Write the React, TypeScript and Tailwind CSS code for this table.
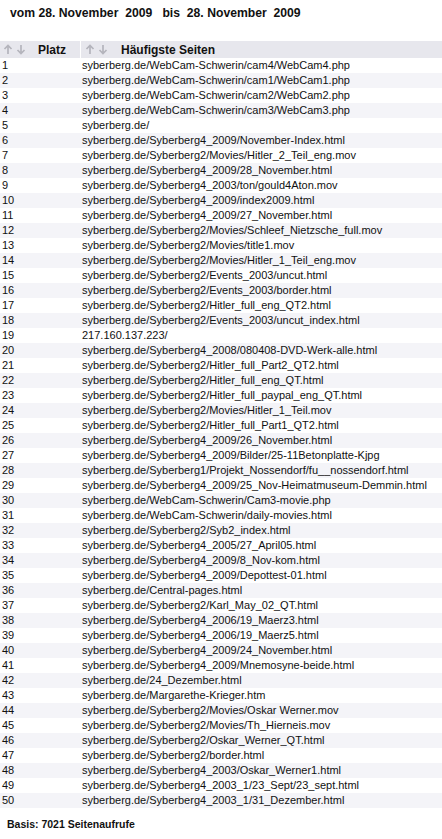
import React from "react";

const rows = [
  "syberberg.de/WebCam-Schwerin/cam4/WebCam4.php",
  "syberberg.de/WebCam-Schwerin/cam1/WebCam1.php",
  "syberberg.de/WebCam-Schwerin/cam2/WebCam2.php",
  "syberberg.de/WebCam-Schwerin/cam3/WebCam3.php",
  "syberberg.de/",
  "syberberg.de/Syberberg4_2009/November-Index.html",
  "syberberg.de/Syberberg2/Movies/Hitler_2_Teil_eng.mov",
  "syberberg.de/Syberberg4_2009/28_November.html",
  "syberberg.de/Syberberg4_2003/ton/gould4Aton.mov",
  "syberberg.de/Syberberg4_2009/index2009.html",
  "syberberg.de/Syberberg4_2009/27_November.html",
  "syberberg.de/Syberberg2/Movies/Schleef_Nietzsche_full.mov",
  "syberberg.de/Syberberg2/Movies/title1.mov",
  "syberberg.de/Syberberg2/Movies/Hitler_1_Teil_eng.mov",
  "syberberg.de/Syberberg2/Events_2003/uncut.html",
  "syberberg.de/Syberberg2/Events_2003/border.html",
  "syberberg.de/Syberberg2/Hitler_full_eng_QT2.html",
  "syberberg.de/Syberberg2/Events_2003/uncut_index.html",
  "217.160.137.223/",
  "syberberg.de/Syberberg4_2008/080408-DVD-Werk-alle.html",
  "syberberg.de/Syberberg2/Hitler_full_Part2_QT2.html",
  "syberberg.de/Syberberg2/Hitler_full_eng_QT.html",
  "syberberg.de/Syberberg2/Hitler_full_paypal_eng_QT.html",
  "syberberg.de/Syberberg2/Movies/Hitler_1_Teil.mov",
  "syberberg.de/Syberberg2/Hitler_full_Part1_QT2.html",
  "syberberg.de/Syberberg4_2009/26_November.html",
  "syberberg.de/Syberberg4_2009/Bilder/25-11Betonplatte-Kjpg",
  "syberberg.de/Syberberg1/Projekt_Nossendorf/fu__nossendorf.html",
  "syberberg.de/Syberberg4_2009/25_Nov-Heimatmuseum-Demmin.html",
  "syberberg.de/WebCam-Schwerin/Cam3-movie.php",
  "syberberg.de/WebCam-Schwerin/daily-movies.html",
  "syberberg.de/Syberberg2/Syb2_index.html",
  "syberberg.de/Syberberg4_2005/27_April05.html",
  "syberberg.de/Syberberg4_2009/8_Nov-kom.html",
  "syberberg.de/Syberberg4_2009/Depottest-01.html",
  "syberberg.de/Central-pages.html",
  "syberberg.de/Syberberg2/Karl_May_02_QT.html",
  "syberberg.de/Syberberg4_2006/19_Maerz3.html",
  "syberberg.de/Syberberg4_2006/19_Maerz5.html",
  "syberberg.de/Syberberg4_2009/24_November.html",
  "syberberg.de/Syberberg4_2009/Mnemosyne-beide.html",
  "syberberg.de/24_Dezember.html",
  "syberberg.de/Margarethe-Krieger.htm",
  "syberberg.de/Syberberg2/Movies/Oskar Werner.mov",
  "syberberg.de/Syberberg2/Movies/Th_Hierneis.mov",
  "syberberg.de/Syberberg2/Oskar_Werner_QT.html",
  "syberberg.de/Syberberg2/border.html",
  "syberberg.de/Syberberg4_2003/Oskar_Werner1.html",
  "syberberg.de/Syberberg4_2003_1/23_Sept/23_sept.html",
  "syberberg.de/Syberberg4_2003_1/31_Dezember.html",
];

function Arrows() {
  return (
    <span className="flex items-center gap-[3px]">
      <svg width="10" height="11" viewBox="0 0 10 11">
        <path d="M5 1.5 L5 10 M1.5 5 L5 1.5 L8.5 5" stroke="#b4b4bc" strokeWidth="1.7" fill="none" />
      </svg>
      <svg width="10" height="11" viewBox="0 0 10 11">
        <path d="M5 1 L5 9.5 M1.5 6 L5 9.5 L8.5 6" stroke="#b4b4bc" strokeWidth="1.7" fill="none" />
      </svg>
    </span>
  );
}

export default function App() {
  return (
    <div
      className="w-[442px] h-[839px] bg-white text-[#111] overflow-hidden"
      style={{ fontFamily: '"Liberation Sans", Arial, sans-serif' }}
    >
      <div className="pt-[4px] pl-[10px] h-[41px] text-[12.2px] font-bold whitespace-pre">
        {"vom 28. November  2009   bis  28. November  2009"}
      </div>
      <div className="flex h-[17px] items-stretch">
        <div className="w-[80px] bg-[#e7e7ed] flex items-center pl-[3px] gap-[12px]">
          <Arrows />
          <span className="text-[12px] font-bold">Platz</span>
        </div>
        <div className="w-[1px] bg-white" />
        <div className="flex-1 bg-[#e7e7ed] flex items-center pl-[4px] gap-[13px]">
          <Arrows />
          <span className="text-[12px] font-bold">Häufigste Seiten</span>
        </div>
      </div>
      <div className="flex flex-col">
        {rows.map((r, i) => (
          <div
            key={i}
            className={`flex h-[15px] items-center text-[11px] leading-[15px] ${
              i % 2 === 0 ? "bg-white" : "bg-[#f4f4f8]"
            }`}
          >
            <span className="w-[82px] pl-[2px]">{i + 1}</span>
            <span className="whitespace-nowrap">{r}</span>
          </div>
        ))}
      </div>
      <div className="pt-[9px] pl-[7px] text-[10.5px] font-bold">Basis: 7021 Seitenaufrufe</div>
    </div>
  );
}
